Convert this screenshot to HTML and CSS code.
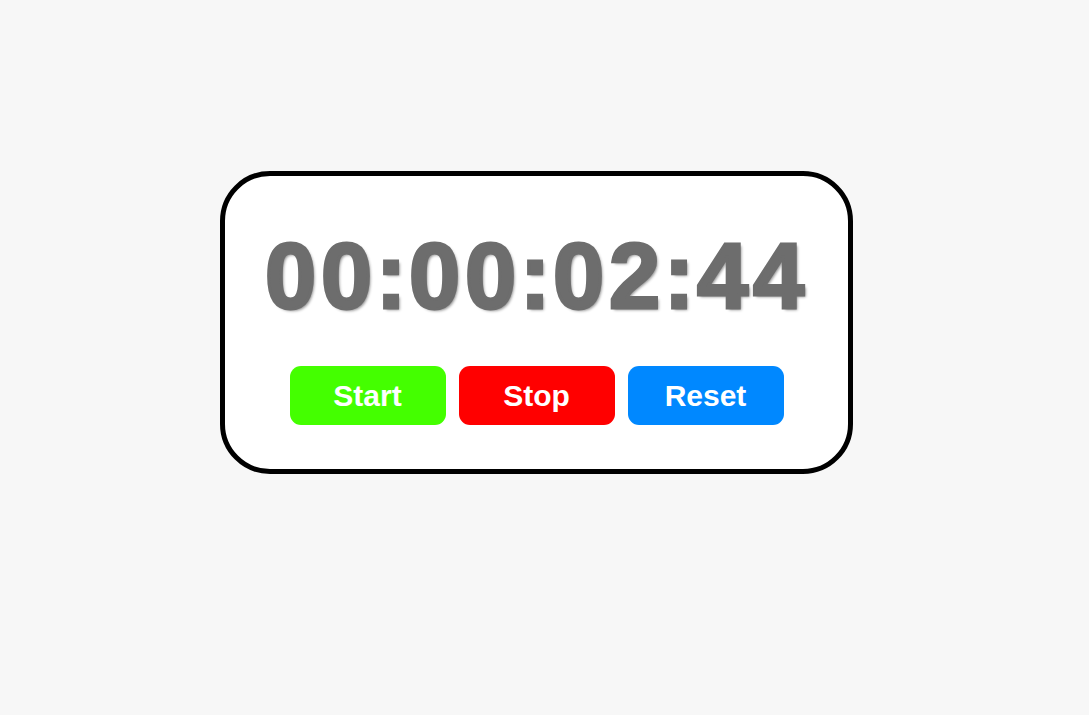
FILE: index.html
```html
<!DOCTYPE html>
<html lang="en">
<head>
<meta charset="utf-8">
<title>Stopwatch</title>
<link rel="stylesheet" href="styles.css">
</head>
<body>
<div class="page">
  <div class="card">
    <div class="time"><span class="d">0</span><span class="d pre">0</span><span class="c">:</span><span class="d">0</span><span class="d pre">0</span><span class="c">:</span><span class="d">0</span><span class="d pre">2</span><span class="c">:</span><span class="d">4</span><span class="d">4</span></div>
    <div class="buttons">
      <button class="btn btn-start">Start</button>
      <button class="btn btn-stop">Stop</button>
      <button class="btn btn-reset">Reset</button>
    </div>
  </div>
</div>
</body>
</html>
```
FILE: styles.css
```css
html, body {
  margin: 0;
  padding: 0;
  background: #f7f7f7;
  font-family: "Liberation Sans", Arial, sans-serif;
}
.page {
  display: flex;
  justify-content: center;
  padding: 171px 16px 0 0;
  height: 715px;
  box-sizing: border-box;
}
.card {
  box-sizing: border-box;
  width: 633px;
  height: 303px;
  border: 5px solid #000;
  border-radius: 50px;
  background: #fff;
  padding: 52px 0 44px;
  display: flex;
  flex-direction: column;
  align-items: center;
}
.time {
  display: flex;
  margin-right: 4px;
  font-size: 92px;
  line-height: 96px;
  height: 96px;
  font-weight: bold;
  color: #6d6d6d;
  -webkit-text-stroke: 3px #6d6d6d;
  text-shadow: 2px 2px 3px rgba(0, 0, 0, 0.45);
  white-space: nowrap;
}
.d {
  width: 56px;
  text-align: center;
}
.d.pre {
  box-sizing: content-box;
  padding-right: 1px;
}
.c {
  width: 31px;
  text-align: center;
}
.buttons {
  display: flex;
  gap: 13px;
  margin-top: 42px;
}
.btn {
  width: 156px;
  height: 59px;
  border: none;
  border-radius: 11px;
  color: #fff;
  font-family: "Liberation Sans", Arial, sans-serif;
  font-size: 30px;
  font-weight: bold;
  padding: 0;
  display: flex;
  align-items: center;
  justify-content: center;
}
.btn-start { background: #44ff00; }
.btn-stop { background: #ff0000; }
.btn-reset { background: #0088ff; }
```
